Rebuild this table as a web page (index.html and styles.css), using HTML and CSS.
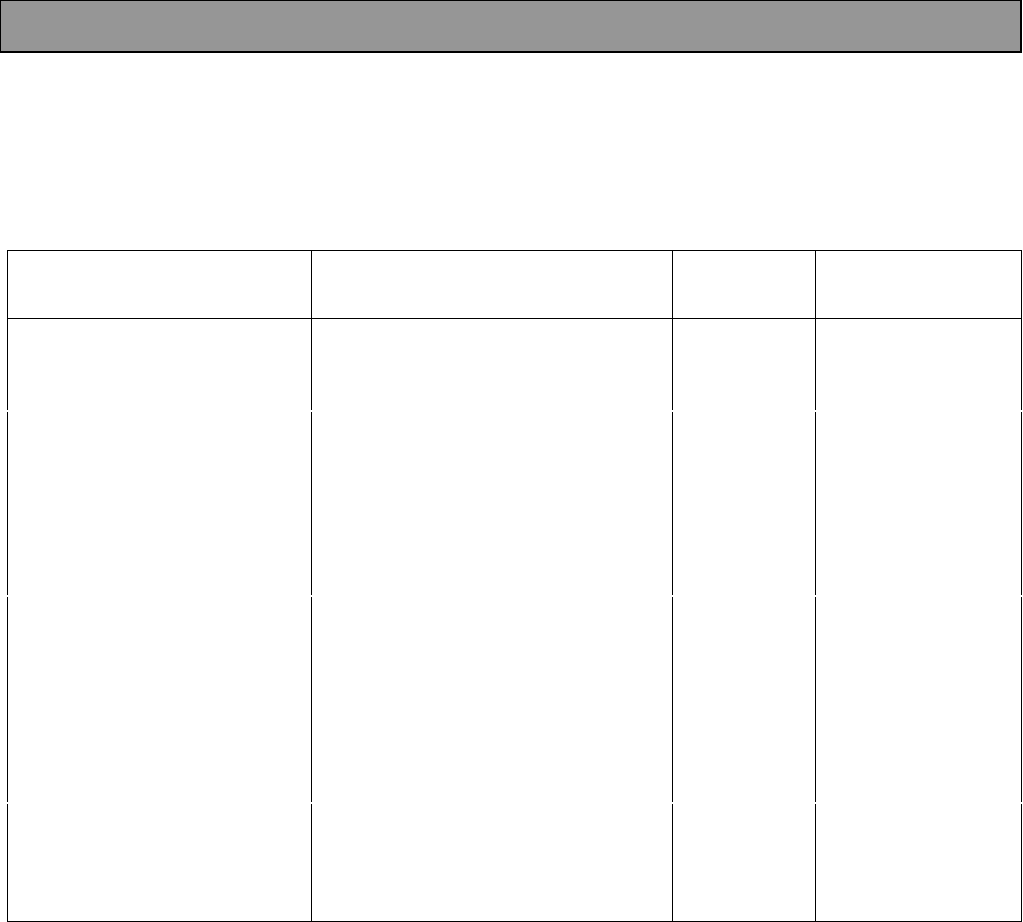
FILE: index.html
```html
<!DOCTYPE html>
<html lang="en">
<head>
    <meta charset="UTF-8">
    <meta name="viewport" content="width=device-width, initial-scale=1.0">
    <title>Form</title>
    <link rel="stylesheet" href="styles.css">
</head>
<body>
    <div class="title-bar"></div>

    <div class="grid">
        <div class="row head-row">
            <div class="cell c1"></div>
            <div class="cell c2"></div>
            <div class="cell c3"></div>
            <div class="cell c4"></div>
        </div>
        <div class="row r1">
            <div class="cell c1"></div>
            <div class="cell c2"></div>
            <div class="cell c3"></div>
            <div class="cell c4"></div>
        </div>
        <div class="row r2">
            <div class="cell c1"></div>
            <div class="cell c2"></div>
            <div class="cell c3"></div>
            <div class="cell c4"></div>
        </div>
        <div class="row r3">
            <div class="cell c1"></div>
            <div class="cell c2"></div>
            <div class="cell c3"></div>
            <div class="cell c4"></div>
        </div>
        <div class="row r4">
            <div class="cell c1"></div>
            <div class="cell c2"></div>
            <div class="cell c3"></div>
            <div class="cell c4"></div>
        </div>
    </div>
</body>
</html>
```

FILE: styles.css
```css
body {
    margin: 0;
    background-color: #fff;
    font-family: "Liberation Sans", Arial, sans-serif;
    color: #000;
}
.title-bar {
    width: 1019px;
    height: 50px;
    background-color: #969696;
    border-style: solid;
    border-color: #000;
    border-width: 1px 2px 2px 1px;
}
.grid {
    margin: 197px 0 0 7px;
    width: 1015px;
    border-top: 1px solid #000;
    border-bottom: 1px solid #000;
}
.row {
    display: flex;
}
.row + .row {
    margin-top: 2px;
}
.head-row + .row {
    margin-top: 0;
}
.cell {
    border-left: 1px solid #000;
    box-sizing: border-box;
}
.cell.c4 {
    border-right: 1px solid #000;
}
.c1 { width: 304px; }
.c2 { width: 361px; }
.c3 { width: 143px; }
.c4 { width: 207px; }
.head-row {
    height: 67px;
    border-bottom: 1px solid #000;
}
.head-row .cell {
    height: 67px;
}
.r1 { height: 91px; }
.r2 { height: 183px; }
.r3 { height: 205px; }
.r4 { height: 117px; }
```
